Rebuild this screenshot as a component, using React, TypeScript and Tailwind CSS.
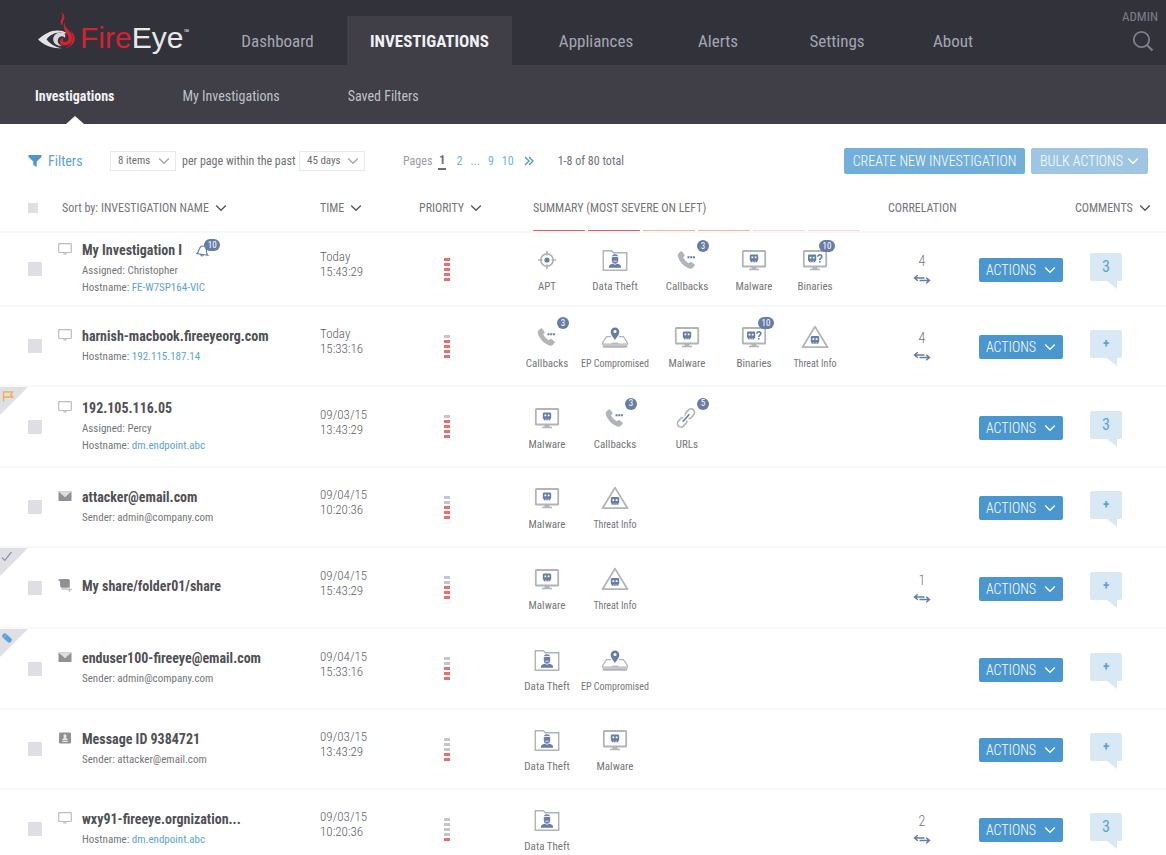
import React from "react";

type Severity = 0 | 1 | 2 | 3 | 4 | 5;
type Kind = "apt" | "theft" | "callbacks" | "malware" | "binaries" | "endpoint" | "threat" | "urls";
type Source = "screen" | "mail" | "share" | "message";
type Flag = "flag" | "check" | "pencil";

interface Finding {
  kind: Kind;
  count?: number;
}

interface Investigation {
  name: string;
  source: Source;
  alerts?: number;
  details: { label: string; value: string; link?: boolean }[];
  date: string;
  time: string;
  severity: Severity;
  findings: Finding[];
  correlation?: number;
  comments?: number;
  flag?: Flag;
}

const rows: Investigation[] = [
  {
    name: "My Investigation I",
    source: "screen",
    alerts: 10,
    details: [
      { label: "Assigned", value: "Christopher" },
      { label: "Hostname", value: "FE-W7SP164-VIC", link: true },
    ],
    date: "Today",
    time: "15:43:29",
    severity: 5,
    findings: [{ kind: "apt" }, { kind: "theft" }, { kind: "callbacks", count: 3 }, { kind: "malware" }, { kind: "binaries", count: 10 }],
    correlation: 4,
    comments: 3,
  },
  {
    name: "harnish-macbook.fireeyeorg.com",
    source: "screen",
    details: [{ label: "Hostname", value: "192.115.187.14", link: true }],
    date: "Today",
    time: "15:33:16",
    severity: 4,
    findings: [{ kind: "callbacks", count: 3 }, { kind: "endpoint" }, { kind: "malware" }, { kind: "binaries", count: 10 }, { kind: "threat" }],
    correlation: 4,
  },
  {
    name: "192.105.116.05",
    source: "screen",
    details: [
      { label: "Assigned", value: "Percy" },
      { label: "Hostname", value: "dm.endpoint.abc", link: true },
    ],
    date: "09/03/15",
    time: "13:43:29",
    severity: 4,
    findings: [{ kind: "malware" }, { kind: "callbacks", count: 3 }, { kind: "urls", count: 5 }],
    comments: 3,
    flag: "flag",
  },
  {
    name: "attacker@email.com",
    source: "mail",
    details: [{ label: "Sender", value: "admin@company.com" }],
    date: "09/04/15",
    time: "10:20:36",
    severity: 3,
    findings: [{ kind: "malware" }, { kind: "threat" }],
  },
  {
    name: "My share/folder01/share",
    source: "share",
    details: [],
    date: "09/04/15",
    time: "15:43:29",
    severity: 3,
    findings: [{ kind: "malware" }, { kind: "threat" }],
    correlation: 1,
    flag: "check",
  },
  {
    name: "enduser100-fireeye@email.com",
    source: "mail",
    details: [{ label: "Sender", value: "admin@company.com" }],
    date: "09/04/15",
    time: "15:33:16",
    severity: 3,
    findings: [{ kind: "theft" }, { kind: "endpoint" }],
    flag: "pencil",
  },
  {
    name: "Message ID 9384721",
    source: "message",
    details: [{ label: "Sender", value: "attacker@email.com" }],
    date: "09/03/15",
    time: "13:43:29",
    severity: 2,
    findings: [{ kind: "theft" }, { kind: "malware" }],
  },
  {
    name: "wxy91-fireeye.orgnization...",
    source: "screen",
    details: [{ label: "Hostname", value: "dm.endpoint.abc", link: true }],
    date: "09/03/15",
    time: "10:20:36",
    severity: 1,
    findings: [{ kind: "theft" }],
    correlation: 2,
    comments: 3,
  },
];

const labels: Record<Kind, string> = {
  apt: "APT",
  theft: "Data Theft",
  callbacks: "Callbacks",
  malware: "Malware",
  binaries: "Binaries",
  endpoint: "EP Compromised",
  threat: "Threat Info",
  urls: "URLs",
};

const GREY = "#b1b4b8";
const BLUE = "#667da6";

function Chevron({ className = "" }: { className?: string }) {
  return (
    <svg viewBox="0 0 12 8" className={`h-2 w-3 shrink-0 ${className}`} fill="none" stroke="currentColor" aria-hidden="true">
      <path d="M1.2 1.5 6 6.3l4.800-4.800" strokeWidth="1.300" />
    </svg>
  );
}

function Bot({ x, y, w = 9 }: { x: number; y: number; w?: number }) {
  const s = w / 9;
  return (
    <g transform={`translate(${x} ${y}) scale(${s})`}>
      <path fill={BLUE} d="M1.600 0h5.800C8.400 0 9 .6 9 1.600v4.200c0 .7-.4 1.200-1 1.200v1.400H1V7C.4 7 0 6.500 0 5.800V1.600C0 .6.6 0 1.600 0Z" />
      <path fill="#fff" d="M1.800 2.300h1.900v1.900h-1.900zM5.300 2.300h1.900v1.900h-1.900z" />
      <path fill="#fff" opacity=".7" d="M2.600 6.800h.6v1.600h-.6zM4.200 6.800h.6v1.600h-.6zM5.800 6.800h.6v1.600h-.6z" />
    </g>
  );
}

function FindingIcon({ kind }: { kind: Kind }) {
  const common = { viewBox: "0 0 28 24", className: "h-6 w-7", fill: "none", "aria-hidden": true } as const;
  switch (kind) {
    case "apt":
      return (
        <svg {...common}>
          <circle cx="14" cy="12" r="6.200" stroke={GREY} strokeWidth="1.700" />
          <path d="M14 3v4.500M14 16.500V21M5 12h4.500M18.500 12H23" stroke={GREY} strokeWidth="1.700" />
          <circle cx="14" cy="12" r="2.600" fill={BLUE} />
        </svg>
      );
    case "theft":
      return (
        <svg {...common}>
          <path d="M2.300 22.300V2.700h8.200l2 2h13.200v17.600Z" stroke={GREY} strokeWidth="1.500" />
          <path d="M7.800 19.800c0-2.600 1.300-3.600 4-4l2.200 1 2.200-1c2.700.4 4 1.400 4 4Z" fill={BLUE} />
          <path d="M10.800 9.600c0-2.300 1.300-3.300 3.200-3.300s3.200 1 3.200 3.300v2.600c0 2-1.400 3.500-3.200 3.500s-3.200-1.500-3.200-3.500Z" fill={BLUE} />
          <path d="M11 8.800c1.800-.6 4.200-.6 6 0" stroke="#fff" strokeWidth="1" />
          <path d="M12.200 13.200h3.600" stroke="#fff" strokeWidth=".8" />
        </svg>
      );
    case "callbacks":
      return (
        <svg {...common}>
          <path
            d="M5.600 5.200 7.800 3.500c.5-.4 1-.3 1.400.2l2.300 3.100c.4.5.3 1-.2 1.400l-1.200.9c.8 2.200 3.300 4.900 5.700 6.200l1.200-1.100c.4-.4.9-.4 1.400-.1l3.100 2.300c.5.4.5.9.1 1.400l-1.900 2.100c-.9 1-2.500 1-4 .3C10.700 18.200 6.200 13.300 4.900 8.500c-.3-1.300-.2-2.600.7-3.300Z"
            fill={GREY}
          />
          <path d="M14.500 8.300h2v2h-2zM17.200 8.300h2v2h-2zM19.900 8.300h2v2h-2z" fill={BLUE} />
        </svg>
      );
    case "malware":
      return (
        <svg {...common}>
          <rect x="2.800" y="3" width="22.400" height="15.500" rx=".6" stroke={GREY} strokeWidth="1.800" />
          <path d="M11.500 19h5v1.700h2.500v1.500H9v-1.500h2.500Z" fill={GREY} />
          <Bot x={9.800} y={6.400} w={8.400} />
        </svg>
      );
    case "binaries":
      return (
        <svg {...common}>
          <rect x="2.800" y="3" width="22.400" height="15.500" rx=".6" stroke={GREY} strokeWidth="1.800" />
          <path d="M11.500 19h5v1.700h2.500v1.500H9v-1.500h2.500Z" fill={GREY} />
          <Bot x={7} y={6.600} w={8.200} />
          <path d="M16.800 8.700c0-2.600 4-2.400 4 0 0 1.500-2 1.400-2 3.200M18.800 12.900v1.700" stroke={BLUE} strokeWidth="1.600" />
        </svg>
      );
    case "endpoint":
      return (
        <svg {...common}>
          <path d="M10 11.700H5.500L1.500 18v1.200h25V18l-4-6.300H18" stroke={GREY} strokeWidth="1.200" />
          <path d="M1.600 20.300h24.800v1.200c0 .8-.6 1.200-1.300 1.200H2.900c-.7 0-1.300-.4-1.300-1.200Z" fill={GREY} />
          <path d="M10.500 18.200h7" stroke={GREY} strokeWidth="1.200" />
          <path d="M14 15.500c-.6-2.700-4.300-4.800-4.300-8.800a4.300 4.300 0 0 1 8.600 0c0 4-3.700 6.100-4.300 8.800Z" fill={BLUE} />
          <circle cx="14" cy="6.600" r="1.500" fill="#fff" />
        </svg>
      );
    case "threat":
      return (
        <svg {...common}>
          <path d="M14 1.600 26.500 22.200h-25Z" stroke={GREY} strokeWidth="1.800" strokeLinejoin="round" />
          <Bot x={9.800} y={11} w={8.400} />
        </svg>
      );
    case "urls":
      return (
        <svg {...common}>
          <g transform="rotate(-48 13 12)" stroke={GREY} strokeWidth="1.600">
            <path d="M11.600 9.800c-.5-.9-1.400-1.400-2.500-1.400H5.600a3.600 3.600 0 0 0 0 7.200h3.500c1.100 0 2-.5 2.500-1.400" />
            <path d="M14.400 14.200c.5.9 1.400 1.400 2.500 1.400h3.500a3.600 3.600 0 0 0 0-7.200h-3.500c-1.100 0-2 .5-2.500 1.400" />
            <path d="M8 12h10" stroke={BLUE} />
          </g>
        </svg>
      );
  }
}

function SourceIcon({ source }: { source: Source }) {
  const common = { viewBox: "0 0 14 14", className: "mt-1 h-3.5 w-3.5 shrink-0", fill: "none", "aria-hidden": true } as const;
  switch (source) {
    case "screen":
      return (
        <svg {...common}>
          <rect x=".7" y="1.700" width="12.600" height="8.800" rx=".8" stroke="#b9bcc1" strokeWidth="1.200" />
          <path d="M5 11.200h4l-.6 1.200H5.600Z" fill="#b9bcc1" />
        </svg>
      );
    case "mail":
      return (
        <svg {...common}>
          <path d="M.5 2.500h13v9.500H.5Z" fill="#8f9196" />
          <path d="M.5 2.500h13L7 8.300Z" fill="#dcdde0" />
        </svg>
      );
    case "share":
      return (
        <svg {...common}>
          <path d="M.5 1.300H3V.9h8v.8h.8v8H3.300L2 8V3H.5Z" fill="#8f9196" />
          <path d="M3.500 11h6M11.500 9v5M9 11.500h5" stroke="#c3c5c9" strokeWidth="1.300" />
        </svg>
      );
    case "message":
      return (
        <svg {...common}>
          <rect x="1" y="1.500" width="12" height="11" rx="1.200" fill="#8f9196" />
          <path d="M7 3.300c1.300 0 1.600 1 1.400 2.200L8 7.300l1.700.7v1.300H4.300V8L6 7.300l-.4-1.800C5.400 4.300 5.700 3.300 7 3.300ZM4.300 10h5.400v.9H4.300Z" fill="#e8e8ea" />
        </svg>
      );
  }
}

function CornerFlag({ flag }: { flag: Flag }) {
  return (
    <svg viewBox="0 0 30 30" className="absolute left-0 top-0 h-[30px] w-[30px]" fill="none" role="img" aria-label={flag}>
      <path d="M0 0h28L0 28Z" fill="#dfdfe5" />
      {flag === "flag" && <path d="M3.500 14.500V4.800h9.300L10.600 7.400l2.200 2.600H3.500" stroke="#f0b03f" strokeWidth="1.300" />}
      {flag === "check" && <path d="m2 9.500 2.800 2.800L11.500 4" stroke="#8b94ab" strokeWidth="1.200" />}
      {flag === "pencil" && (
        <g transform="rotate(42 7 9)">
          <rect x="1.500" y="6.500" width="11" height="5" rx="2.300" fill="#5ba3d6" />
          <path d="M4.300 6.500v5" stroke="#8cc0e4" strokeWidth=".8" />
        </g>
      )}
    </svg>
  );
}

function Badge({ children, className = "" }: { children: React.ReactNode; className?: string }) {
  return (
    <span className={`absolute flex h-3 min-w-3 items-center justify-center rounded-full bg-[#667da6] text-[9px] leading-none text-white ${className}`}>
      {children}
    </span>
  );
}

function Logo() {
  return (
    <a href="#home" aria-label="FireEye" className="flex items-end">
      <svg viewBox="0 0 42 44" className="h-11 w-[42px]" fill="none" aria-hidden="true">
        <path d="M0 27.500C6.500 22 12.500 18.600 19.500 18.600c3.600 0 6.600.8 9.200 2.500l-1.400.4c-7.600-2.500-14.700.6-18.700 5.900 3.400 4.200 8 7.500 15.200 8.700C14.500 37.200 6 33 0 27.500Z" fill="#e4e4e8" />
        <path d="M25.500 20.500c-6.700-.8-10.600 2.600-10.300 7.300.4 4.300 4.200 6.600 8.700 5.900-3-.9-4.400-2.900-4.100-5.400.2-2.300 1.800-3.900 3.900-4.100 1.600-.1 2.700.6 3.200 1.800.7-2.100.6-4.200-1.400-5.500Z" fill="#d5d5da" />
        <path d="M26.900 9.500c-.9 4.500 1.600 6.400 4.300 9.300 4.900 5.200 4.400 12.300-1.900 14.300-4.400 1.400-7.900-1-7.300-4.400.4-2 2.200-2.900 3.700-2.200-1.500.8-1.100 3.400 1.200 3.500 3.400.2 4.700-3.600 2.300-7.700-1.700-2.800-5-6.600-2.300-12.800Z" fill="#d52231" />
        <path d="M32.600 18.500c6.700 6.200 5.800 14.500-5.400 18 8.100-4 9-10.800 5.400-18Z" fill="#d52231" />
        <path d="M23.400 0c3.900 3.600 3.400 6 2.200 8.300-1.100 2.100-1.400 3.500-1 5.700-2.400-2.300-2.500-4.300-1.200-6.800 1.300-2.400 1.300-4.300 0-7.200Z" fill="#d52231" />
      </svg>
      <span className="font-['Liberation_Sans',Arial,sans-serif] text-[30px] leading-9 text-[#e9e9ec]">
        <span className="text-[#d52231]">Fire</span>Eye
      </span>
      <span className="self-center text-[11px] leading-4 text-[#e9e9ec]">™</span>
    </a>
  );
}

const nav = ["Dashboard", "Investigations", "Appliances", "Alerts", "Settings", "About"];

function Header() {
  return (
    <header className="bg-[#32323b]">
      <div className="flex h-[65px] items-stretch justify-between">
        <div className="flex">
          <div className="flex w-52 items-start pl-[38px] pt-3">
            <Logo />
          </div>
          <nav aria-label="Main" className="grid grid-cols-[139px_165px_168px_76px_162px_70px] pt-4 text-[17px] text-[#a3a6b2]">
            {nav.map((item) =>
              item === "Investigations" ? (
                <a key={item} href="#investigations" aria-current="page" className="flex items-center justify-center bg-[#403f48] pt-0.5 font-bold uppercase text-[#f0f0f2]">
                  {item}
                </a>
              ) : (
                <a key={item} href={`#${item.toLowerCase()}`} className="flex items-center justify-center pt-0.5">
                  {item}
                </a>
              ),
            )}
          </nav>
        </div>
        <div className="flex flex-col items-end gap-1 pr-2 pt-2 text-[#7d7e89]">
          <a href="#admin" className="text-[13px] leading-[18px]">ADMIN</a>
          <button type="button" aria-label="Search" className="mr-1">
            <svg viewBox="0 0 22 22" className="h-[22px] w-[22px]" fill="none" stroke="currentColor" aria-hidden="true">
              <circle cx="9.500" cy="9.500" r="7.700" strokeWidth="1.800" />
              <path d="m15 15 5.500 5.500" strokeWidth="2.200" />
            </svg>
          </button>
        </div>
      </div>
      <nav aria-label="Investigations" className="flex h-[59px] items-stretch gap-[68px] bg-[#403f48] pl-[35px] text-sm text-[#bfc0c7] [&>a]:pt-0.5">
        <a href="#investigations" aria-current="page" className="relative flex items-center font-bold text-[#f0f0f2]">
          Investigations
          <svg viewBox="0 0 18 8" className="absolute bottom-0 left-1/2 h-2 w-[18px] -translate-x-1/2" aria-hidden="true">
            <path d="M0 8 9 0l9 8Z" fill="#fff" />
          </svg>
        </a>
        <a href="#mine" className="flex items-center">My Investigations</a>
        <a href="#saved" className="flex items-center">Saved Filters</a>
      </nav>
    </header>
  );
}

function Picker({ label, options }: { label: string; options: string[] }) {
  return (
    <span className="relative flex items-center">
      <select aria-label={label} className="h-5 w-[66px] appearance-none border border-[#e6eaec] bg-white pl-[7px] text-[11px] leading-4 text-[#6d6e71]">
        {options.map((o) => (
          <option key={o}>{o}</option>
        ))}
      </select>
      <Chevron className="pointer-events-none absolute right-1.5 text-[#a3a5a9]" />
    </span>
  );
}

function Toolbar() {
  return (
    <div className="flex h-[62px] items-center justify-between pl-7 pr-[18px] pt-3 text-xs text-[#707175]">
      <div className="flex items-center">
        <button type="button" className="flex w-[82px] items-center gap-1.5 text-sm text-[#5ba3d6]">
          <svg viewBox="0 0 14 12" className="h-3 w-3.5" aria-hidden="true">
            <path d="M.5 0h13v2L8.700 6.500V12l-3.400-2V6.500L.5 2Z" fill="#4a97cf" />
          </svg>
          Filters
        </button>
        <Picker label="Items per page" options={["8 items", "16 items", "32 items"]} />
        <span className="w-[123px] whitespace-nowrap pl-1.5">per page within the past</span>
        <Picker label="Time range" options={["45 days", "30 days", "7 days"]} />
        <nav aria-label="Pages" className="ml-[38px] flex items-center gap-2.5 text-[#71b3e0]">
          <span className="-mr-1 text-[#9a9ca5]">Pages</span>
          <a href="#1" aria-current="page" className="border-b-2 border-[#6d6e71] px-px font-bold leading-4 text-[#6d6e71]">1</a>
          <a href="#2">2</a>
          <span className="-mx-0.5">...</span>
          <a href="#9">9</a>
          <a href="#10" className="-ml-0.5">10</a>
          <a href="#next" aria-label="Next page">
            <svg viewBox="0 0 10 10" className="h-2.5 w-2.5" fill="none" stroke="#4a97cf" strokeWidth="1.300" aria-hidden="true">
              <path d="m1 1 4 4-4 4M5 1l4 4-4 4" />
            </svg>
          </a>
        </nav>
        <span className="ml-6">1-8 of 80 total</span>
      </div>
      <div className="flex gap-1.5 text-sm font-light text-white">
        <button type="button" className="flex h-[26px] w-[181px] items-center justify-center rounded-xs bg-[#72b0d9]">CREATE NEW INVESTIGATION</button>
        <button type="button" className="flex h-[26px] w-[117px] items-center justify-center gap-1 rounded-xs bg-[#9ec6e3]">
          BULK ACTIONS
          <Chevron />
        </button>
      </div>
    </div>
  );
}

const box = "block appearance-none bg-[#dedee4] checked:bg-[#4a97cf]";
const severityBars = ["bg-[#e45f62]", "bg-[#e45f62]", "bg-[#efb5ad]", "bg-[#efb5ad]", "bg-[#f8ddd5]", "bg-[#f8ddd5]"];

function SortButton({ children }: { children: React.ReactNode }) {
  return (
    <button type="button" className="flex items-center gap-1.5">
      {children}
      <Chevron className="text-[#55565a]" />
    </button>
  );
}

function HeadRow() {
  return (
    <tr className="h-[46px] border-b-2 border-[#f7f8f9] text-left text-xs text-[#75767a] [&>th]:pb-0.5 [&>th]:font-normal">
      <th scope="col" className="pl-7">
        <input type="checkbox" aria-label="Select all" className={`h-2.5 w-2.5 ${box}`} />
      </th>
      <th scope="col" className="pl-1">
        <SortButton>Sort by: INVESTIGATION NAME</SortButton>
      </th>
      <th scope="col">
        <SortButton>TIME</SortButton>
      </th>
      <th scope="col">
        <SortButton>PRIORITY</SortButton>
      </th>
      <th scope="col" className="relative pl-5">
        SUMMARY (MOST SEVERE ON LEFT)
        <span className="absolute bottom-0 left-5 flex gap-[3px]" aria-hidden="true">
          {severityBars.map((c, i) => (
            <span key={i} className={`h-px w-[52px] ${c}`} />
          ))}
        </span>
      </th>
      <th scope="col">CORRELATION</th>
      <th scope="col" aria-label="Row menu" />
      <th scope="col">
        <SortButton>COMMENTS</SortButton>
      </th>
    </tr>
  );
}

function Row({ row }: { row: Investigation }) {
  return (
    <tr className={`border-b-2 border-[#f7f8f9] text-[#75767a] first:h-[74px] ${row.flag ? "h-[81px]" : "h-20"}`}>
      <td className="relative pl-7">
        {row.flag && <CornerFlag flag={row.flag} />}
        <input type="checkbox" aria-label={`Select ${row.name}`} className={`h-3.5 w-3.5 ${box}`} />
      </td>
      <td className="pb-1">
        <div className="flex gap-2.5">
          <SourceIcon source={row.source} />
          <div>
            <div className="flex items-center gap-3.5">
              <a href="#details" className="text-sm font-bold leading-6 text-[#505154]">{row.name}</a>
              {row.alerts && (
                <span className="relative">
                  <svg viewBox="0 0 14 14" className="h-3.5 w-3.5" fill="none" stroke={BLUE} strokeWidth="1.100" aria-hidden="true">
                    <g transform="rotate(8 7 7)">
                      <path d="M1.200 11.500c1.600-1.200 1.500-2.600 2-5C3.600 4.300 4.900 3 6.800 3s3.200 1.300 3.600 3.500c.4 2.400.4 3.800 2 5ZM5.300 11.800c.3 1.500 2.700 1.500 3 0" />
                    </g>
                  </svg>
                  <Badge className="-top-1 left-2 w-4">{row.alerts}</Badge>
                </span>
              )}
            </div>
            {row.details.map((d) => (
              <div key={d.label} className="text-[11px] leading-[17px]">
                {d.label}:{" "}
                {d.link ? (
                  <a href="#host" className="text-[#5ba3d6]">{d.value}</a>
                ) : (
                  d.value
                )}
              </div>
            ))}
          </div>
        </div>
      </td>
      <td className="pb-2.5 text-[13px] font-light leading-[15px] text-[#606165]">
        {row.date}
        <br />
        {row.time}
      </td>
      <td className="pl-[25px]">
        <div role="img" aria-label={`Priority ${row.severity} of 5`} className="flex w-1.5 flex-col gap-0.5">
          {[5, 4, 3, 2, 1].map((n) => (
            <span key={n} className={`h-[3px] ${n <= row.severity ? "bg-[#ee6b6e]" : "bg-[#c3c7cd]"}`} />
          ))}
        </div>
      </td>
      <td className="pt-1">
        <ul className="grid grid-cols-[68px_68px_76px_58px_64px]">
          {row.findings.map((f) => (
            <li key={f.kind} className="flex flex-col items-center gap-2">
              <span className="relative">
                <FindingIcon kind={f.kind} />
                {f.count && <Badge className={f.count > 9 ? "-top-2 left-[18px] w-4" : "-top-2 left-6"}>{f.count}</Badge>}
              </span>
              <span className={`whitespace-nowrap leading-[14px] ${f.kind === "endpoint" || f.kind === "threat" ? "text-[10px]" : "text-[11px]"}`}>
                {labels[f.kind]}
              </span>
            </li>
          ))}
        </ul>
      </td>
      <td>
        {row.correlation && (
          <div className="flex w-[68px] flex-col items-center gap-1 text-sm font-light leading-4">
            {row.correlation}
            <svg viewBox="0 0 18 12" className="h-3 w-[18px]" fill="none" stroke={BLUE} strokeWidth="1.500" aria-hidden="true">
              <path d="M11.500 5H2M4.800 2.200 1.500 5l3.300 2.800M6.500 7.500H16M13.200 4.700l3.300 2.800-3.300 2.800" />
            </svg>
          </div>
        )}
      </td>
      <td>
        <button type="button" className="mt-0.5 flex h-6 w-[84px] items-center justify-center gap-2 rounded-xs bg-[#4a97cf] text-sm font-light text-white">
          ACTIONS
          <Chevron />
        </button>
      </td>
      <td className="pb-1 pl-[15px]">
        <button type="button" aria-label={row.comments ? `${row.comments} comments` : "Add comment"} className={`relative flex h-7 w-8 items-center justify-center rounded-xs bg-[#d8e8f4] text-[#5ba3d6] ${row.comments ? "text-base" : "text-[13px] font-bold"}`}>
          {row.comments ?? "+"}
          <svg viewBox="0 0 10 8" className="absolute left-[17px] top-full h-2 w-2.5" aria-hidden="true">
            <path d="M0 0h10v8Z" fill="#d8e8f4" />
          </svg>
        </button>
      </td>
    </tr>
  );
}

export default function App() {
  return (
    <div className="min-h-screen bg-white font-['Roboto_Condensed',Roboto,sans-serif]">
      <Header />
      <main>
        <Toolbar />
        <table className="w-full table-fixed border-collapse">
          <colgroup>
            <col className="w-[58px]" />
            <col className="w-[262px]" />
            <col className="w-[99px]" />
            <col className="w-[94px]" />
            <col />
            <col className="w-[91px]" />
            <col className="w-24" />
            <col className="w-[91px]" />
          </colgroup>
          <thead>
            <HeadRow />
          </thead>
          <tbody>
            {rows.map((row) => (
              <Row key={row.name} row={row} />
            ))}
          </tbody>
        </table>
      </main>
    </div>
  );
}
